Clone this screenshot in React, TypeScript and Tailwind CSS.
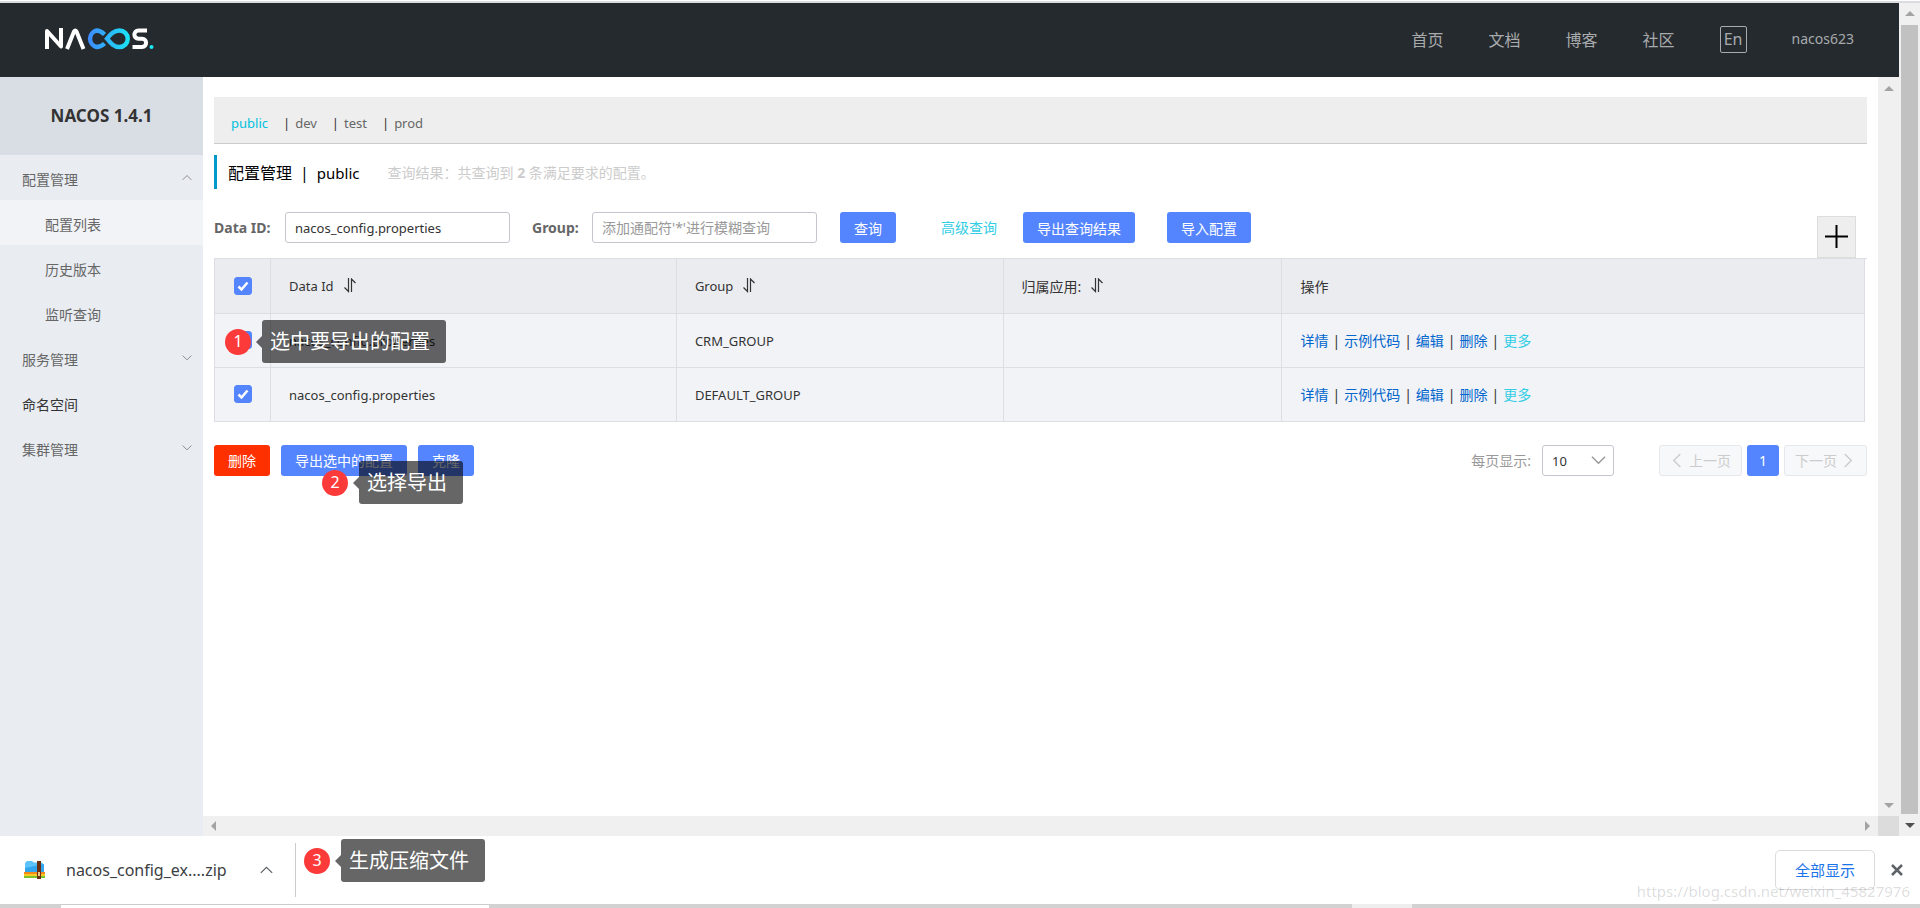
import { useState } from "react";
import type { ReactNode } from "react";

type Config = {
  id: number;
  dataId: string;
  group: string;
  app: string;
};

const configs: Config[] = [
  { id: 1, dataId: "nacos_config.properties", group: "CRM_GROUP", app: "" },
  { id: 2, dataId: "nacos_config.properties", group: "DEFAULT_GROUP", app: "" },
];

const namespaces = ["public", "dev", "test", "prod"];
const navLinks = ["首页", "文档", "博客", "社区"];

function Logo() {
  return (
    <svg width="110" height="22" viewBox="0 0 110 22" fill="none" aria-label="NACOS">
      <defs>
        <linearGradient id="loop" x1="41" y1="0" x2="86" y2="0" gradientUnits="userSpaceOnUse">
          <stop offset="0" stopColor="#3f86ff" />
          <stop offset="1" stopColor="#19e8f5" />
        </linearGradient>
      </defs>
      <path d="M2 21V3L16 18.500V0" stroke="#fff" strokeWidth="4" strokeLinejoin="round" />
      <path d="M22 21L29 3.500Q30.300 1.500 31.500 3.500L38.500 21" stroke="#fff" strokeWidth="4" strokeLinejoin="round" />
      <path
        d="M59.500 15.500C57 18 54.500 19 51.500 19A8.500 8.500 0 0 1 51.500 2.500C54.500 2.500 57 4 59.500 6.500M62 10.700C66 6 69 2.500 74.500 2.500A8.250 8.250 0 0 1 74.500 19C69 19 66 15.500 62 10.700Z"
        stroke="url(#loop)"
        strokeWidth="4.400"
      />
      <path d="M102 2.500H93.500C88 2.500 88 10.700 93.500 10.700H97C102.500 10.700 102.500 19 97 19H87.500" stroke="#fff" strokeWidth="4" />
      <circle cx="106.500" cy="19" r="2" fill="#19e8f5" />
    </svg>
  );
}

function Chevron({ dir, size, className }: { dir: "up" | "down" | "left" | "right"; size: number; className?: string }) {
  const paths = {
    up: "M1 11L8 4L15 11",
    down: "M1 4L8 11L15 4",
    left: "M11 1L4 8L11 15",
    right: "M4 1L11 8L4 15",
  };
  return (
    <svg width={size} height={size} viewBox="0 0 16 16" fill="none" stroke="currentColor" strokeWidth="1.5" className={className}>
      <path d={paths[dir]} />
    </svg>
  );
}

function Arrow({ dir, className }: { dir: "up" | "down" | "left" | "right"; className?: string }) {
  const points = {
    up: "0,7 5,2 10,7",
    down: "0,3 5,8 10,3",
    left: "7,0 2,5 7,10",
    right: "3,0 8,5 3,10",
  };
  return (
    <svg width="10" height="10" viewBox="0 0 10 10" fill="currentColor" className={className}>
      <polygon points={points[dir]} />
    </svg>
  );
}

function SortIcon() {
  return (
    <svg width="12" height="15" viewBox="0 0 12 15" fill="none" stroke="#333" strokeWidth="1.200" className="mb-0.5 ml-2.5">
      <path d="M4.500 0V13.500L0.500 9.500M7.500 14V1L11.500 5" />
    </svg>
  );
}

function ZipIcon() {
  return (
    <svg width="21" height="20" viewBox="0 0 21 20">
      <path d="M1 3L3 1H8L10 2.500H18L20 5V13H1Z" fill="#5cc3fa" />
      <path d="M1 8L20 4V13H1Z" fill="#31a5ee" />
      <rect y="12" width="21" height="3" fill="#f08a1d" />
      <rect y="14" width="21" height="2" fill="#f9c925" />
      <rect y="16" width="21" height="2" fill="#7cc22c" />
      <rect x="13" y="1" width="4" height="18" fill="#6b2f12" />
      <rect x="14" y="12" width="2" height="4" fill="#e9c58c" />
    </svg>
  );
}

function Check({ checked, onChange, label }: { checked: boolean; onChange: () => void; label: string }) {
  return (
    <label className="relative mx-auto block size-[18px]">
      <input
        type="checkbox"
        checked={checked}
        onChange={onChange}
        aria-label={label}
        className="block size-[18px] appearance-none rounded-[3px] border border-[#c4c6cf] bg-white checked:border-[#5584ff] checked:bg-[#5584ff]"
      />
      {checked && (
        <svg viewBox="0 0 18 18" fill="none" stroke="#fff" strokeWidth="2.500" className="pointer-events-none absolute inset-0">
          <path d="M4.500 9.500L7.500 12.500L13.500 5.500" />
        </svg>
      )}
    </label>
  );
}

function Button({ children, danger }: { children: ReactNode; danger?: boolean }) {
  return (
    <button
      type="button"
      className={`h-[31px] rounded-[3px] px-3.5 pt-0.5 text-sm text-white ${danger ? "bg-[#ff3000]" : "bg-[#5584ff]"}`}
    >
      {children}
    </button>
  );
}

// numbered marker with its dark label, laid over the page
function Step({ n, text, className }: { n: number; text: string; className: string }) {
  return (
    <div className={`absolute z-10 flex items-center ${className}`}>
      <span className="flex size-[26px] items-center justify-center rounded-full bg-[#fc3a3a] pb-0.5 text-base text-white">
        {n}
      </span>
      <span className="ml-[5px] border-y-[6px] border-r-[6px] border-y-transparent border-r-black/60" />
      <span className="h-[43px] rounded-[3px] bg-black/60 pr-4 pl-2 text-xl leading-[44px] whitespace-nowrap text-white">
        {text}
      </span>
    </div>
  );
}

function MenuItem({ text, open, dark }: { text: string; open?: boolean; dark?: boolean }) {
  return (
    <a href="#" className={`flex h-[45px] items-center justify-between pr-[11px] pl-[22px] ${dark ? "text-[#333]" : "text-[#666]"}`}>
      <span className="pt-1">{text}</span>
      {!dark && <Chevron dir={open ? "up" : "down"} size={10} className="text-[#888]" />}
    </a>
  );
}

function SubItem({ text, active }: { text: string; active?: boolean }) {
  return (
    <a href="#" className={`flex h-[45px] items-center pt-1 pl-[45px] text-[#666] ${active ? "bg-[#f2f3f7]" : ""}`}>
      {text}
    </a>
  );
}

export default function App() {
  const [selected, setSelected] = useState<number[]>([1, 2]);
  const [dataId, setDataId] = useState("nacos_config.properties");
  const [group, setGroup] = useState("");

  const allSelected = selected.length === configs.length;

  const toggleAll = () => setSelected(allSelected ? [] : configs.map((c) => c.id));
  const toggle = (id: number) =>
    setSelected(selected.includes(id) ? selected.filter((s) => s !== id) : [...selected, id]);

  return (
    <div className="flex h-screen flex-col overflow-hidden bg-white font-['Noto_Sans','Noto_Sans_CJK_SC',sans-serif] text-sm text-[#333]">
      <div className="mt-px h-0.5 shrink-0 bg-[#dadce0]" />

      <div className="flex min-h-0 flex-1">
        <div className="flex min-w-0 flex-1 flex-col">
          {/* HEADER */}
          <header className="flex h-[74px] shrink-0 items-center justify-between bg-[#252a2f] px-[45px] pb-0.5 text-base text-[#a8aaac]">
            <Logo />
            <nav className="flex items-center gap-[45px]">
              {navLinks.map((link) => (
                <a key={link} href="#" className="pt-0.5">
                  {link}
                </a>
              ))}
              <button type="button" className="h-[27px] w-[27px] rounded-xs border border-[#a8aaac] leading-none">
                En
              </button>
              <a href="#" className="text-sm">
                nacos623
              </a>
            </nav>
          </header>

          <div className="flex min-h-0 flex-1">
            {/* MENU */}
            <aside className="w-[203px] shrink-0 bg-[#e9edf2]">
              <h1 className="h-[78px] bg-[#d9dde4] text-center text-[17px] leading-[78px] font-bold">NACOS 1.4.1</h1>
              <MenuItem text="配置管理" open />
              <SubItem text="配置列表" active />
              <SubItem text="历史版本" />
              <SubItem text="监听查询" />
              <MenuItem text="服务管理" />
              <MenuItem text="命名空间" dark />
              <MenuItem text="集群管理" />
            </aside>

            <div className="flex min-w-0 flex-1 flex-col">
              <div className="flex min-h-0 flex-1">
                <main className="relative min-w-0 flex-1 px-[11px] pt-5">
                  {/* NAMESPACES */}
                  <div className="flex h-[47px] items-center border-b border-[#ccc] bg-[#eee] pt-1.5 pl-[17px] text-[13px] text-[#666]">
                    {namespaces.map((ns, i) => (
                      <div key={ns} className="mr-[15px] flex">
                        {i > 0 && <span className="mr-[5px] text-[#333]">|</span>}
                        <a href="#" className={i === 0 ? "text-[#00c1de]" : ""}>
                          {ns}
                        </a>
                      </div>
                    ))}
                  </div>

                  <div className="mt-[11px] flex h-[34px] items-center border-l-3 border-[#09c] pt-0.5 pl-[11px]">
                    <h2 className="flex items-center gap-2 text-base text-black">
                      <span>配置管理</span>
                      <span>|</span>
                      <span className="text-[15px]">public</span>
                    </h2>
                    <p className="ml-7 text-[#ccc]">
                      查询结果：共查询到 <strong>2</strong> 条满足要求的配置。
                    </p>
                  </div>

                  {/* QUERY FORM */}
                  <form className="mt-[23px] flex h-[31px] items-center" onSubmit={(e) => e.preventDefault()}>
                    <label htmlFor="dataId" className="w-[71px] font-bold text-[#666]">
                      Data ID:
                    </label>
                    <input
                      id="dataId"
                      type="text"
                      value={dataId}
                      onChange={(e) => setDataId(e.target.value)}
                      className="h-[31px] w-[225px] rounded-[3px] border border-[#c4c6cf] px-[9px] text-[13px]"
                    />
                    <label htmlFor="group" className="ml-[22px] w-[60px] font-bold text-[#666]">
                      Group:
                    </label>
                    <input
                      id="group"
                      type="text"
                      value={group}
                      placeholder="添加通配符'*'进行模糊查询"
                      onChange={(e) => setGroup(e.target.value)}
                      className="mr-[23px] h-[31px] w-[225px] rounded-[3px] border border-[#c4c6cf] px-[9px] placeholder:text-[#999]"
                    />
                    <Button>查询</Button>
                    <a href="#" className="mr-[26px] ml-[45px] text-[#33cde5]">
                      高级查询
                    </a>
                    <Button>导出查询结果</Button>
                    <span className="w-8" />
                    <Button>导入配置</Button>
                    <button
                      type="button"
                      aria-label="新建配置"
                      className="mt-[18px] mr-[11px] ml-auto flex h-[42px] w-[39px] shrink-0 items-center justify-center border border-[#ddd] bg-[#eee]"
                    >
                      <svg width="23" height="23" viewBox="0 0 23 23" stroke="#000" strokeWidth="2">
                        <path d="M11.500 0V23M0 11.500H23" />
                      </svg>
                    </button>
                  </form>

                  {/* CONFIG TABLE */}
                  <div className="mt-[15px] border-t border-[#dcdee3] pr-0.5">
                    <table className="w-full table-fixed border-collapse border border-t-0 border-[#dcdee3] text-left [&_td]:border [&_td]:border-[#dcdee3] [&_td:not(:first-child)]:px-[18px] [&_td:not(:first-child)]:pt-0.5 [&_th]:border [&_th]:border-t-0 [&_th]:border-[#dcdee3] [&_th]:font-normal [&_th:not(:first-child)]:px-[18px] [&_th:not(:first-child)]:pt-0.5">
                      <colgroup>
                        <col className="w-[56px]" />
                        <col className="w-[24.600%]" />
                        <col className="w-[19.800%]" />
                        <col className="w-[16.900%]" />
                        <col />
                      </colgroup>
                      <thead>
                        <tr className="h-[54px] bg-[#ebecf0]">
                          <th>
                            <Check checked={allSelected} onChange={toggleAll} label="全选" />
                          </th>
                          {["Data Id", "Group"].map((title) => (
                            <th key={title}>
                              <div className="flex items-center text-[13px]">
                                {title}
                                <SortIcon />
                              </div>
                            </th>
                          ))}
                          <th>
                            <div className="flex items-center">
                              归属应用:
                              <SortIcon />
                            </div>
                          </th>
                          <th>操作</th>
                        </tr>
                      </thead>
                      <tbody>
                        {configs.map((config) => (
                          <tr key={config.id} className="h-[54px] bg-[#f2f3f7]">
                            <td>
                              <Check
                                checked={selected.includes(config.id)}
                                onChange={() => toggle(config.id)}
                                label={config.dataId}
                              />
                            </td>
                            <td className="text-[13px]">{config.dataId}</td>
                            <td className="text-[13px]">{config.group}</td>
                            <td>{config.app}</td>
                            <td>
                              <div className="flex gap-1 text-[#06c]">
                                {["详情", "示例代码", "编辑", "删除"].map((action) => (
                                  <span key={action} className="flex gap-1">
                                    <a href="#">{action}</a>
                                    <span className="text-[#333]">|</span>
                                  </span>
                                ))}
                                <a href="#" className="text-[#33cde5]">
                                  更多
                                </a>
                              </div>
                            </td>
                          </tr>
                        ))}
                      </tbody>
                    </table>
                  </div>

                  {/* ACTIONS + PAGINATION */}
                  <div className="mt-[23px] flex items-center justify-between">
                    <div className="flex gap-[11px]">
                      <Button danger>删除</Button>
                      <Button>导出选中的配置</Button>
                      <Button>克隆</Button>
                    </div>
                    <div className="flex items-center">
                      <label htmlFor="pageSize" className="mr-[11px] pt-0.5 text-[#999]">
                        每页显示:
                      </label>
                      <div className="relative mr-[45px]">
                        <select
                          id="pageSize"
                          defaultValue="10"
                          className="h-[31px] w-[72px] appearance-none rounded-[3px] border border-[#c4c6cf] bg-white pt-0.5 pl-[9px] text-[13px]"
                        >
                          <option>10</option>
                          <option>20</option>
                          <option>50</option>
                        </select>
                        <Chevron dir="down" size={15} className="pointer-events-none absolute top-2 right-2 text-[#999]" />
                      </div>
                      <div className="flex gap-[5px]">
                        <button
                          type="button"
                          disabled
                          className="flex h-[31px] w-[83px] items-center justify-center gap-1 rounded-[3px] border border-[#e6e7eb] bg-[#f7f8fa] text-[#ccc]"
                        >
                          <Chevron dir="left" size={15} />
                          <span className="pt-0.5">上一页</span>
                        </button>
                        <button type="button" className="h-[31px] w-8 rounded-[3px] bg-[#5584ff] pt-0.5 text-white">
                          1
                        </button>
                        <button
                          type="button"
                          disabled
                          className="flex h-[31px] w-[83px] items-center justify-center gap-1 rounded-[3px] border border-[#e6e7eb] bg-[#f7f8fa] text-[#ccc]"
                        >
                          <span className="pt-0.5">下一页</span>
                          <Chevron dir="right" size={15} />
                        </button>
                      </div>
                    </div>
                  </div>

                  <Step n={1} text="选中要导出的配置" className="top-[243px] left-[22px]" />
                  <Step n={2} text="选择导出" className="top-[384px] left-[119px]" />
                </main>

                <div className="flex w-[21px] shrink-0 flex-col items-center justify-between bg-[#f0f0f0] pt-[7px] pb-1.5 text-[#a3a3a3]">
                  <Arrow dir="up" />
                  <Arrow dir="down" />
                </div>
              </div>

              <div className="flex h-5 shrink-0 bg-[#f0f0f0] text-[#a3a3a3]">
                <div className="flex flex-1 items-center justify-between px-1.5">
                  <Arrow dir="left" />
                  <Arrow dir="right" />
                </div>
                <div className="w-[21px] bg-[#dcdcdc]" />
              </div>
            </div>
          </div>
        </div>

        {/* window scrollbar */}
        <div className="flex w-[21px] shrink-0 flex-col items-center bg-[#f0f0f0] px-0.5">
          <Arrow dir="up" className="my-[6px] shrink-0 text-[#a3a3a3]" />
          <div className="w-full flex-1 bg-[#c1c1c1]" />
          <Arrow dir="down" className="my-[6px] shrink-0 text-[#505050]" />
        </div>
      </div>

      {/* DOWNLOAD BAR */}
      <footer className="relative flex h-[68px] shrink-0 items-center pr-[17px] pl-6">
        <ZipIcon />
        <span className="ml-[21px] w-[194px] text-base text-[#3c4043]">nacos_config_ex....zip</span>
        <button type="button" aria-label="更多操作">
          <Chevron dir="up" size={13} className="text-[#5f6368]" />
        </button>
        <span className="ml-[22px] h-[54px] w-px bg-[#ccc]" />
        <Step n={3} text="生成压缩文件" className="top-[3px] left-[304px]" />
        <button type="button" className="mr-4 ml-auto h-10 w-[100px] rounded-[5px] border border-[#dadce0] pt-0.5 text-[15px] text-[#1a73e8]">
          全部显示
        </button>
        <button type="button" aria-label="关闭">
          <svg width="12" height="12" viewBox="0 0 12 12" stroke="#5f6368" strokeWidth="2.500">
            <path d="M1 1L11 11M11 1L1 11" />
          </svg>
        </button>
        <span className="absolute right-[10px] bottom-0.5 text-[15px] text-black/15">
          https://blog.csdn.net/weixin_45827976
        </span>
      </footer>
      <div className="flex h-1 shrink-0 justify-between bg-[#d2d2d2] pr-[508px] pl-[61px]">
        <span className="w-[428px] border-t border-[#ccc] bg-white" />
        <span className="w-[60px] bg-[#eee]" />
      </div>
    </div>
  );
}
